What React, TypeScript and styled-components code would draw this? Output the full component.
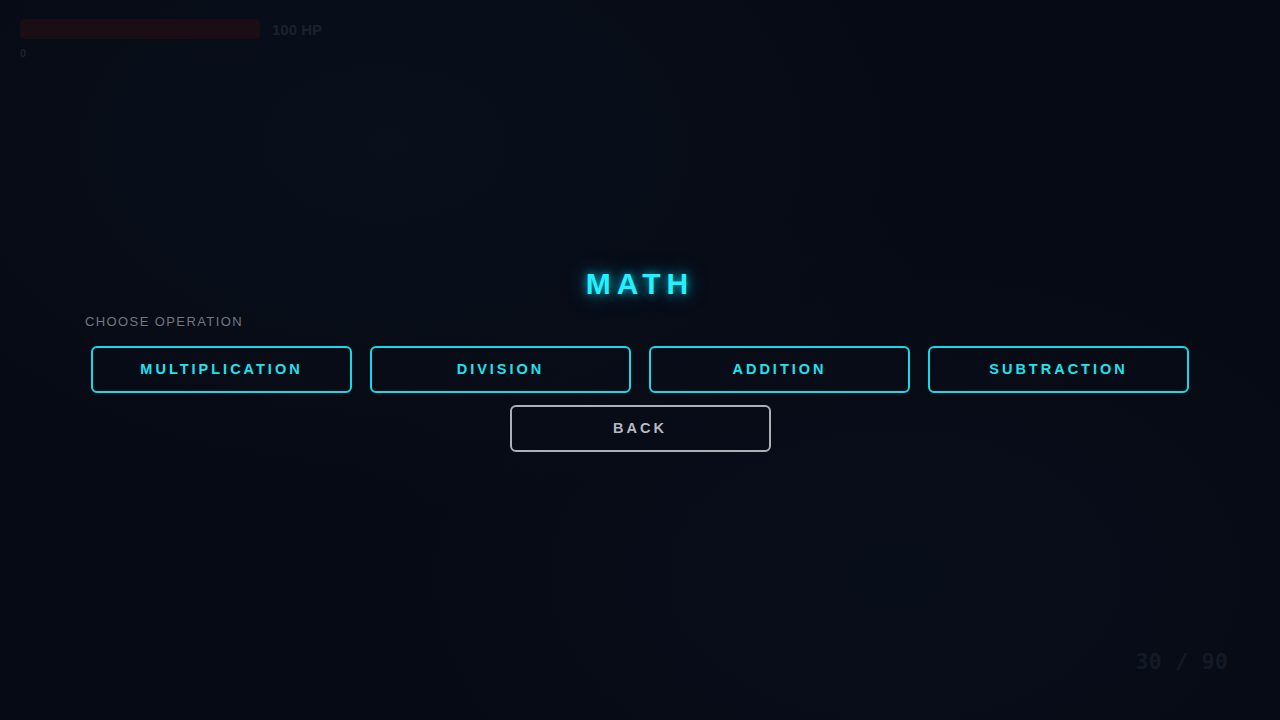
import styled, { createGlobalStyle } from 'styled-components';

const GlobalStyle = createGlobalStyle`
    html, body, #root {
        margin: 0;
        height: 100%;
    }
    body {
        background: #060a14;
        font-family: 'Liberation Sans', Arial, sans-serif;
        overflow: hidden;
    }
`;

const Screen = styled.div`
    position: relative;
    width: 100%;
    height: 100%;
    display: flex;
    align-items: center;
    justify-content: center;
    background:
        radial-gradient(ellipse at 30% 20%, rgba(20, 40, 60, 0.18), transparent 45%),
        radial-gradient(ellipse at 70% 80%, rgba(20, 30, 55, 0.18), transparent 45%),
        #060a14;
`;

const Hud = styled.div`
    position: absolute;
    top: 19px;
    left: 20px;
    display: flex;
    flex-direction: column;
    gap: 8px;
`;

const HpRow = styled.div`
    display: flex;
    align-items: center;
    gap: 12px;
`;

const HpBar = styled.div`
    width: 240px;
    height: 20px;
    border-radius: 4px;
    background: #1a0d14;
`;

const HpText = styled.span`
    color: #1b222d;
    font-size: 15px;
    font-weight: bold;
`;

const Score = styled.span`
    color: #1b222d;
    font-size: 11px;
    font-weight: bold;
`;

const Counter = styled.div`
    position: absolute;
    right: 52px;
    bottom: 46px;
    color: #141a25;
    font-family: 'DejaVu Sans Mono', monospace;
    font-weight: bold;
    font-size: 22px;
`;

const Menu = styled.div`
    width: 1110px;
    margin-top: -2px;
    display: flex;
    flex-direction: column;
    align-items: center;
`;

const Title = styled.h1`
    margin: 0 0 13px;
    color: #22f2ff;
    font-size: 30px;
    font-weight: bold;
    letter-spacing: 6px;
    text-shadow: 0 0 10px rgba(0, 230, 255, 0.75), 0 0 22px rgba(0, 200, 255, 0.4);
`;

const Label = styled.div`
    align-self: flex-start;
    color: #727782;
    font-size: 13px;
    letter-spacing: 1.4px;
    margin-bottom: 17px;
`;

const ButtonRow = styled.div`
    width: 1098px;
    display: grid;
    grid-template-columns: repeat(4, 1fr);
    gap: 18px;
    margin-bottom: 12px;
`;

const Button = styled.button<{ $muted?: boolean }>`
    height: 47px;
    width: ${p => (p.$muted ? '261px' : 'auto')};
    background: transparent;
    border: 2px solid ${p => (p.$muted ? '#aeb0b8' : '#14dbe8')};
    border-radius: 6px;
    color: ${p => (p.$muted ? '#b8b9c0' : '#1ee3ef')};
    font-family: 'Liberation Sans', Arial, sans-serif;
    font-size: 14.5px;
    font-weight: bold;
    letter-spacing: 3px;
    cursor: pointer;
    padding: 0;
`;

const operations = ['MULTIPLICATION', 'DIVISION', 'ADDITION', 'SUBTRACTION'];

export default function App() {
    return (
        <>
            <GlobalStyle />
            <Screen>
                <Hud>
                    <HpRow>
                        <HpBar />
                        <HpText>100 HP</HpText>
                    </HpRow>
                    <Score>0</Score>
                </Hud>
                <Menu>
                    <Title>MATH</Title>
                    <Label>CHOOSE OPERATION</Label>
                    <ButtonRow>
                        {operations.map(op => (
                            <Button key={op}>{op}</Button>
                        ))}
                    </ButtonRow>
                    <Button $muted>BACK</Button>
                </Menu>
                <Counter>30 / 90</Counter>
            </Screen>
        </>
    );
}
